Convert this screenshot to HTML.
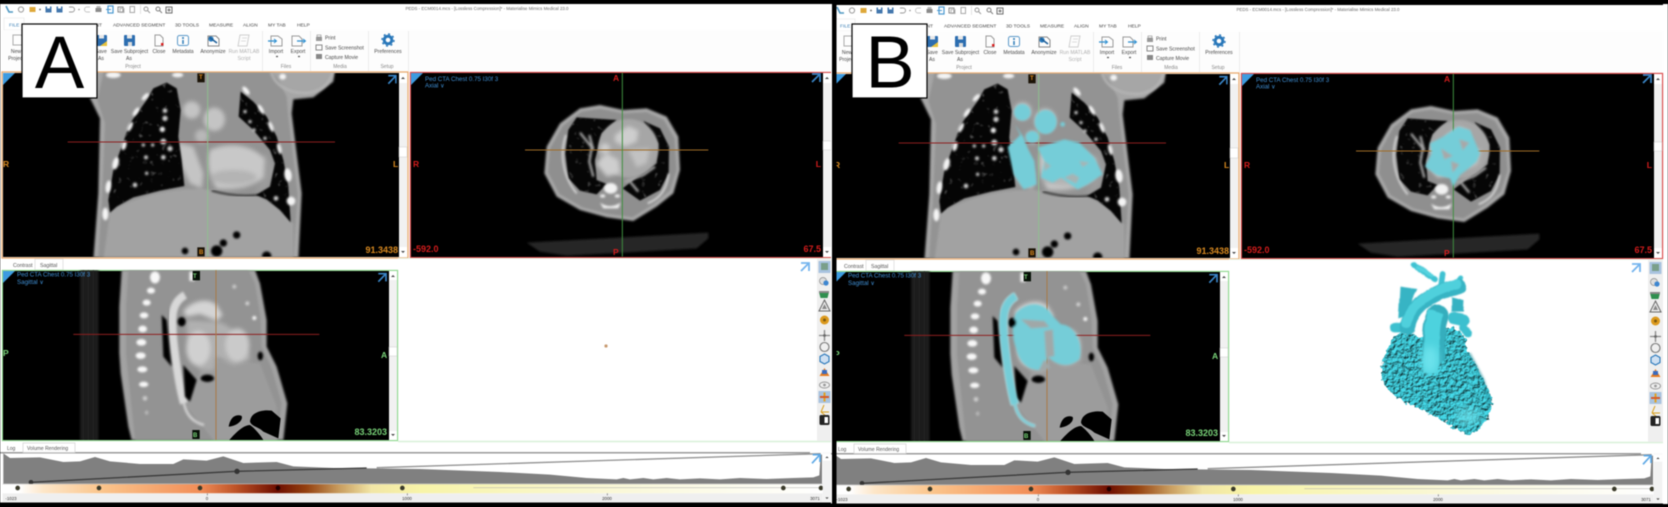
<!DOCTYPE html>
<html><head><meta charset="utf-8"><title>Mimics Medical comparison</title>
<style>
html,body{margin:0;padding:0;background:#000;width:1668px;height:507px;overflow:hidden}
svg{display:block;filter:blur(.5px)}
text{font-family:"Liberation Sans",sans-serif}
.tb{font-size:4.9px;fill:#444}
.rb{font-size:5.1px;fill:#4a4a4a;text-anchor:middle}
.rl{font-size:5.1px;fill:#4a4a4a}
.gp{font-size:5px;fill:#888;text-anchor:middle}
.inf{font-size:6.2px;fill:#3f8fd4}
.o{fill:#d98a20;font-weight:bold;font-size:8.5px}
.r{fill:#d41c1c;font-weight:bold;font-size:8.5px}
.g{fill:#79d379;font-weight:bold;font-size:8.5px}
.tk{font-size:4.4px;fill:#333;text-anchor:middle}
.big{font-size:74px;fill:#000;text-anchor:middle}
</style></head><body>
<svg xmlns="http://www.w3.org/2000/svg" width="1668" height="507" viewBox="0 0 1668 507">
<defs>
<filter id="b3"><feGaussianBlur stdDeviation="3"/></filter>
<filter id="b6" x="-30%" y="-30%" width="160%" height="160%"><feGaussianBlur stdDeviation="6"/></filter>
<filter id="b14" x="-30%" y="-30%" width="160%" height="160%"><feGaussianBlur stdDeviation="12"/></filter>
<filter id="lung" color-interpolation-filters="sRGB" x="-5%" y="-5%" width="110%" height="110%">
<feTurbulence type="fractalNoise" baseFrequency=".06" numOctaves="2" seed="7"/>
<feColorMatrix values="0 0 0 0 .42  0 0 0 0 .42  0 0 0 0 .42  3.500 0 0 0 -2.250" result="sp"/>
<feGaussianBlur in="SourceGraphic" stdDeviation="2.500" result="base"/>
<feComposite in="sp" in2="SourceAlpha" operator="in" result="t"/>
<feGaussianBlur in="t" stdDeviation="1.500" result="t2"/>
<feMerge><feMergeNode in="base"/><feMergeNode in="t2"/></feMerge></filter>
<filter id="bump" color-interpolation-filters="sRGB" x="-10%" y="-10%" width="120%" height="120%"><feTurbulence type="fractalNoise" baseFrequency=".075" numOctaves="3" seed="4" result="n"/><feDisplacementMap in="SourceGraphic" in2="n" scale="18" xChannelSelector="R" yChannelSelector="G" result="d"/><feDiffuseLighting in="n" surfaceScale="7" lighting-color="#fff" result="l"><feDistantLight azimuth="235" elevation="58"/></feDiffuseLighting><feComposite in="l" in2="d" operator="arithmetic" k1="1.12" k2="0" k3="0" k4="0"/></filter>
<filter id="soft" color-interpolation-filters="sRGB" x="-15%" y="-15%" width="130%" height="130%"><feTurbulence type="fractalNoise" baseFrequency=".03" numOctaves="2" seed="9" result="n"/><feDisplacementMap in="SourceGraphic" in2="n" scale="7" xChannelSelector="R" yChannelSelector="G"/><feGaussianBlur stdDeviation="1.500"/></filter>
<linearGradient id="bar" x1="0" x2="1" gradientUnits="objectBoundingBox">
<stop offset="0" stop-color="#fff"/><stop offset=".02" stop-color="#fff"/><stop offset=".05" stop-color="#fde6c8"/><stop offset=".12" stop-color="#fbc58c"/><stop offset=".24" stop-color="#f28e58"/><stop offset=".285" stop-color="#bd5226"/><stop offset=".335" stop-color="#6e0e00"/><stop offset=".37" stop-color="#94400f"/><stop offset=".41" stop-color="#c89c5e"/><stop offset=".45" stop-color="#f2e6a6"/><stop offset=".51" stop-color="#f8f4a8"/><stop offset=".75" stop-color="#faf8d8"/><stop offset="1" stop-color="#fff"/></linearGradient>
<clipPath id="c1"><rect x="10" y="38" width="1180" height="552"/></clipPath>
<clipPath id="c2"><rect x="93" y="38" width="1236" height="552"/></clipPath>
<clipPath id="c3"><rect x="10" y="90" width="1155" height="510"/></clipPath>

<g id="gfx">
<rect x="0" y="4" width="832" height="500" fill="#fff"/>
<rect x="4" y="18" width="20" height="12" fill="#fff" stroke="#e4e4e4" stroke-width=".6"/>
<rect x="0" y="30" width="832" height="41" fill="#fdfdfd"/>
<g stroke="#ececec"><path d="M262.500 31V71M310.500 31V71M368.500 31V71M408.500 31V71"/></g>
<g stroke-width="1" fill="none" opacity=".85">
<path d="M6,6 L9,12 H13" stroke="#2f86b8" stroke-width="1.600"/>
<circle cx="21" cy="9.500" r="2.600" stroke="#888"/>
<rect x="29.500" y="7" width="6" height="5" fill="#d99a18"/>
<circle cx="40" cy="9.500" r=".9" fill="#444" stroke="none"/>
<rect x="45.500" y="6.500" width="6" height="6" fill="#23609f"/><rect x="47" y="6.500" width="3" height="2" fill="#fff"/>
<rect x="56.500" y="6.500" width="6" height="6" fill="#23609f"/><rect x="58" y="6.500" width="3" height="2" fill="#fff"/>
<path d="M69,7 H72 A2.500,2.500 0 0 1 72,12 H69" stroke="#888"/>
<circle cx="79" cy="9.500" r=".8" fill="#777" stroke="none"/>
<path d="M90,7 H87 A2.500,2.500 0 0 0 87,12 H90" stroke="#bbb"/>
<rect x="95.500" y="8" width="6" height="4" fill="#777"/><rect x="96.500" y="6" width="4" height="2" fill="#aaa"/>
<rect x="108" y="6" width="5" height="7" stroke="#2a86c8" stroke-width="1.200"/><path d="M106,9.500 H111" stroke="#2a86c8"/>
<rect x="118" y="7" width="5" height="5" stroke="#777"/><rect x="120" y="8.500" width="4" height="4" stroke="#aaa"/>
<rect x="130" y="6.500" width="4.500" height="6" stroke="#999"/>
<path d="M140.500,5V14" stroke="#ddd"/>
<circle cx="146" cy="9" r="2" stroke="#888"/><path d="M147.500,10.500L150,13" stroke="#888"/>
<circle cx="158" cy="9" r="2" stroke="#666"/><path d="M159.500,10.500L162,13" stroke="#666"/>
<rect x="166" y="7" width="6" height="6" stroke="#555"/><circle cx="169" cy="10" r="1.500" fill="#777" stroke="none"/>
</g>
<g fill="none" stroke-width="1">
<path d="M13,35 H21 L24,38 V45 H13 Z" stroke="#aaa"/>
<rect x="96" y="35" width="11" height="11" rx="1" fill="#2d6eb0"/><rect x="99" y="35" width="5" height="3.500" fill="#e8e8e8"/><path d="M100,46 L107,41 V46Z" fill="#e8c33c"/>
<rect x="124" y="35" width="11" height="11" rx="1" fill="#2d6eb0"/><rect x="127" y="35" width="5" height="3.500" fill="#e8e8e8"/><rect x="128" y="42" width="4" height="4" fill="#ddd"/>
<path d="M155,35 H160 L163,38 V46 H155 Z" stroke="#999"/><rect x="161" y="43" width="2.500" height="2.500" fill="#d82020"/>
<rect x="177.500" y="35.500" width="11" height="10" rx="2" stroke="#5a98c8"/><circle cx="183" cy="38" r="1" fill="#2b7ab8"/><path d="M183,40V44" stroke="#2b7ab8" stroke-width="1.500"/>
<path d="M208,36 H216 L219,39 V46 H208Z" stroke="#888"/><circle cx="211" cy="39" r="2.600" fill="#2d7ec0"/><path d="M209,37L217,43" stroke="#1d5f98" stroke-width="1.600"/>
<path d="M240,35 H249 L247,46 H238Z" stroke="#cfcfcf"/><path d="M242,38H247M241,41H246" stroke="#ddd"/>
<path d="M271,36 H278 L282,39 V46 H271Z" stroke="#999"/><path d="M268,41 H276" stroke="#2f90d0" stroke-width="1.300"/><path d="M274,39 L276.500,41 274,43" stroke="#2f90d0"/>
<path d="M292,36 H299 L302,39 V46 H292Z" stroke="#999"/><path d="M297,41 H305" stroke="#2f90d0" stroke-width="1.300"/><path d="M303,39 L305.500,41 303,43" stroke="#2f90d0"/>
<rect x="316" y="37" width="6" height="4" fill="#999"/><rect x="317" y="35" width="4" height="2" stroke="#888" stroke-width=".6"/>
<rect x="316" y="45" width="6" height="5" stroke="#888"/>
<rect x="316" y="54" width="6" height="5" fill="#888"/>
<circle cx="388" cy="40" r="3.800" stroke="#2a78ba" stroke-width="3"/><circle cx="388" cy="40" r="6" stroke="#2a78ba" stroke-width="1.400" stroke-dasharray="2 2.700"/>
<path d="M276,56.500h2M298,56.500h2" stroke="#555" stroke-width="1.200"/>
</g>

<!-- Coronal -->
<rect x="2" y="72" width="406" height="186" fill="#fff" stroke="#e8aa70" stroke-width="1.300"/>
<rect x="3" y="73" width="396" height="184" fill="#000"/>
<g transform="translate(0,60) scale(.33333)" clip-path="url(#c1)">
<path filter="url(#b3)" fill="#a6a6a6" d="M275,30 L268,110 L300,175 L295,400 L280,600 L895,600 L905,400 L875,160 L880,118 L940,112 L1000,65 L1005,30 Z"/>
<path filter="url(#b3)" fill="#939393" d="M312,30 L292,120 L315,190 L306,410 L294,600 L880,600 L893,400 L865,170 L860,110 L835,60 L810,30Z"/>
<path fill="none" stroke="#b5b5b5" stroke-width="7" filter="url(#b3)" d="M812,30 C820,70 860,105 930,98 C975,90 995,60 998,30"/>
<path filter="url(#b3)" fill="#a2a2a2" d="M330,455 C420,400 560,375 640,392 L770,408 C810,420 860,470 880,490 L880,600 L310,600Z"/>
<g filter="url(#b6)" fill="#c4c4c4">
<circle cx="575" cy="150" r="26"/><ellipse cx="643" cy="178" rx="32" ry="35"/><circle cx="605" cy="228" r="20" fill="#b8b8b8"/>
<path d="M530,248 L580,260 L610,340 L605,385 L570,370 L545,320Z"/>
<path d="M630,270 C700,240 780,260 810,320 C800,370 720,395 650,385 C625,350 620,300 630,270Z" fill="#c8c8c8"/>
<ellipse cx="700" cy="352" rx="70" ry="22" fill="#b4b4b4"/>
<path d="M795,270 L825,330 L800,385 L760,400 L790,360Z" fill="#9c9c9c"/>
</g>
<path filter="url(#lung)" fill="#050505" d="M500,68 L530,85 L542,150 L535,230 L545,300 L553,378 L480,392 L400,412 L350,440 L330,458 L325,420 L340,330 L365,260 L390,190 L440,120 L460,85 Z"/>
<path filter="url(#lung)" fill="#050505" d="M722,95 L760,125 L800,170 L830,230 L850,300 L865,380 L872,487 L840,450 L800,418 L768,405 L810,380 L825,310 L810,270 L760,210 L716,170 Z"/>
<path fill="none" stroke="#0a0a0a" stroke-width="4" filter="url(#b3)" d="M635,392 C680,405 730,410 775,405"/>
<g fill="#d0d0d0" filter="url(#b3)">
<circle cx="495" cy="152" r="7"/><circle cx="495" cy="175" r="8"/><circle cx="487" cy="208" r="8" fill="#eee"/><circle cx="490" cy="245" r="9"/><circle cx="510" cy="266" r="8"/><circle cx="430" cy="255" r="5"/><circle cx="458" cy="255" r="5"/><circle cx="490" cy="292" r="7"/><circle cx="438" cy="292" r="6"/><circle cx="440" cy="340" r="5"/><circle cx="405" cy="375" r="7"/>
<circle cx="735" cy="155" r="5"/><circle cx="750" cy="185" r="5"/><circle cx="762" cy="210" r="5"/><circle cx="795" cy="235" r="5"/><circle cx="828" cy="415" r="7"/>
</g>
<g fill="#f5f5f5" filter="url(#b3)">
<ellipse cx="436" cy="110" rx="6" ry="14" transform="rotate(45 436 110)"/><ellipse cx="408" cy="155" rx="6" ry="15" transform="rotate(35 408 155)"/><ellipse cx="390" cy="200" rx="6" ry="16" transform="rotate(25 390 200)"/><ellipse cx="372" cy="256" rx="7" ry="15" transform="rotate(15 372 256)"/><ellipse cx="347" cy="310" rx="9" ry="19" transform="rotate(15 347 310)"/><ellipse cx="325" cy="380" rx="8" ry="19" transform="rotate(8 325 380)"/><ellipse cx="316" cy="462" rx="9" ry="19"/>
<ellipse cx="738" cy="92" rx="7" ry="15" transform="rotate(-40 738 92)"/><ellipse cx="783" cy="148" rx="6" ry="16" transform="rotate(-30 783 148)"/><ellipse cx="813" cy="200" rx="6" ry="17" transform="rotate(-22 813 200)"/><ellipse cx="838" cy="266" rx="6" ry="17" transform="rotate(-14 838 266)"/><ellipse cx="864" cy="345" rx="11" ry="20" transform="rotate(-8 864 345)"/><ellipse cx="873" cy="423" rx="13" ry="13"/>
<ellipse cx="340" cy="45" rx="22" ry="9"/><ellipse cx="533" cy="45" rx="17" ry="7"/><ellipse cx="848" cy="50" rx="10" ry="9"/>
</g>
<g fill="#040404" filter="url(#b3)"><circle cx="555" cy="573" r="10"/><circle cx="650" cy="573" r="17"/><circle cx="670" cy="549" r="11"/><circle cx="710" cy="525" r="11"/><circle cx="800" cy="588" r="14"/></g>
<path d="M203,246 H1005" stroke="#8d1f1f" stroke-width="3"/>
<path d="M623,38 V590" stroke="#8fbf8f" stroke-width="3"/>
<rect x="592" y="40" width="22" height="27" fill="#1a1206"/><rect x="592" y="562" width="22" height="27" fill="#1a1206"/>
<path d="M1165,47 H1188 V70 M1186,49 L1165,71" fill="none" stroke="#3a86c8" stroke-width="5"/>
</g>
<path d="M3,73 H15 L3,85Z" fill="#3d9be0"/>
<rect x="399" y="73" width="8" height="184" fill="#f1f1f1"/><rect x="399" y="73" width="8" height="10" fill="#fff"/><rect x="399" y="247" width="8" height="10" fill="#fff"/><rect x="399" y="147" width="8" height="10" fill="#fff" stroke="#ccc" stroke-width=".5"/>
<path d="M401,79l2-2 2,2ZM401,251l2,2 2-2Z" fill="#444"/>

<!-- Axial -->
<rect x="410.500" y="72.500" width="421" height="185" fill="#f0f0f0" stroke="#d94a4a" stroke-width="1.300"/>
<rect x="411" y="73" width="412" height="184" fill="#000"/>
<g transform="translate(380,60) scale(.33333)" clip-path="url(#c2)">
<path filter="url(#b3)" fill="#262626" d="M440,548 L985,518 L985,535 L950,565 L730,578 L560,587 L480,575Z"/>
<path filter="url(#b3)" fill="#a8a8a8" d="M600,145 L660,135 L730,150 L800,145 L860,170 L895,230 L900,330 L880,400 L830,440 L760,483 L680,472 L600,450 L530,410 L493,340 L500,260 L540,190Z"/>
<path filter="url(#b3)" fill="#8f8f8f" d="M605,155 L660,146 L730,160 L800,156 L852,180 L884,235 L890,330 L870,392 L824,430 L758,472 L684,462 L607,442 L538,402 L504,338 L510,265 L548,198Z"/>
<path filter="url(#lung)" fill="#060606" d="M590,172 L710,180 L665,220 L645,300 L650,360 L680,372 L650,403 L600,392 L565,355 L556,280 L565,210Z"/>
<path filter="url(#lung)" fill="#060606" d="M790,183 L840,205 L867,260 L866,340 L840,390 L780,422 L728,385 L780,345 L830,310 L835,250Z"/>
<g filter="url(#b3)" fill="none" stroke="#a8a8a8" stroke-width="7"><path d="M600,218 L635,262 L628,305 L640,350"/><path d="M628,225 L640,270"/><path d="M735,365 L790,345 L825,320"/><path d="M750,365 L775,395"/></g>
<ellipse cx="745" cy="265" rx="90" ry="88" fill="#a6a6a6" filter="url(#b3)"/>
<g filter="url(#b6)" fill="#cecece"><path d="M745,198 L775,212 L770,245 L735,260 L705,245 L705,225Z"/><path d="M745,270 L810,265 L800,310 L770,322Z" fill="#c2c2c2"/><path d="M648,310 L680,280 L715,300 L720,340 L680,350Z"/><circle cx="675" cy="265" r="15"/></g>
<g fill="none" stroke="#f4f4f4" stroke-width="4" filter="url(#b3)"><path d="M558,225 C540,275 545,345 590,400"/><path d="M866,340 C860,390 840,415 803,430"/></g>
<g fill="#f2f2f2" filter="url(#b3)"><ellipse cx="692" cy="385" rx="20" ry="16"/><ellipse cx="668" cy="408" rx="8" ry="5"/><ellipse cx="712" cy="408" rx="8" ry="5"/><path d="M660,428 C680,442 700,442 722,428 L715,445 L670,445Z"/></g>
<path d="M435,270 H985" stroke="#a06c26" stroke-width="3"/>
<path d="M727,38 V590" stroke="#3f8f3f" stroke-width="3"/>
</g>
<path d="M411,73 H423 L411,85Z" fill="#3d9be0"/>
<path d="M812,74 H820 V82 M819,75 L812,82" fill="none" stroke="#3a86c8" stroke-width="1.700"/>
<rect x="823" y="73" width="8" height="184" fill="#f1f1f1"/><rect x="823" y="73" width="8" height="10" fill="#fff"/><rect x="823" y="247" width="8" height="10" fill="#fff"/><rect x="823" y="141" width="8" height="9" fill="#fff" stroke="#ccc" stroke-width=".5"/>
<path d="M825,79l2-2 2,2ZM825,251l2,2 2-2Z" fill="#444"/>

<rect x="35" y="259" width="28" height="11" fill="#fff" stroke="#d8d8d8" stroke-width=".7"/>

<!-- Sagittal -->
<rect x="2.500" y="270.500" width="395" height="170" fill="#fff" stroke="#90d890" stroke-width="1.300"/>
<rect x="3" y="271" width="386" height="169" fill="#000"/>
<g transform="translate(0,240) scale(.33333)" clip-path="url(#c3)">
<rect x="240" y="90" width="56" height="510" fill="#1a1a1a" filter="url(#b3)"/>
<path d="M250,90V600M265,90V600M280,90V600" stroke="#262626" stroke-width="2"/>
<path filter="url(#b3)" fill="#a2a2a2" d="M365,90 L358,200 L358,340 L362,400 L385,560 L395,600 L850,600 L862,490 L830,380 L800,320 L800,240 L780,130 L765,90Z"/>
<path filter="url(#b3)" fill="#939393" d="M385,90 L378,200 L378,340 L385,410 L405,600 L832,600 L845,490 L815,385 L785,320 L782,235 L765,130 L745,90Z"/>
<path filter="url(#b3)" fill="#9c9c9c" d="M560,500 L600,395 L650,360 L780,370 L830,500 L830,600 L640,600Z"/>
<g filter="url(#b6)">
<path fill="#b0b0b0" d="M560,240 L640,245 L670,250 L745,300 L750,360 L700,375 L650,350 L640,390 L600,390 L560,340Z"/>
<path fill="#d4d4d4" d="M550,215 C570,185 620,170 650,195 L668,225 L650,242 L600,222 L560,230Z"/>
<ellipse cx="595" cy="325" rx="36" ry="52" fill="#d0d0d0"/>
<ellipse cx="712" cy="315" rx="36" ry="50" fill="#cacaca"/>
</g>
<g filter="url(#b3)" fill="none">
<path stroke="#d8d8d8" stroke-width="24" d="M555,165 C510,190 515,240 520,300 C530,390 540,450 552,490"/>
<path stroke="#d0d0d0" stroke-width="8" d="M552,490 C560,530 585,548 612,555"/>
</g>
<g fill="#040404" filter="url(#b3)"><ellipse cx="545" cy="245" rx="12" ry="14"/><ellipse cx="622" cy="415" rx="20" ry="11"/><ellipse cx="781" cy="348" rx="8" ry="13"/>
<path d="M485,225 L500,240 L510,340 L515,380 L490,350Z"/><path d="M550,375 L590,420 L570,485 L555,470Z"/></g>
<g fill="#f8f8f8" filter="url(#b3)"><ellipse cx="465" cy="112" rx="15" ry="18"/><ellipse cx="453" cy="152" rx="12" ry="9"/><ellipse cx="440" cy="188" rx="12" ry="9"/><ellipse cx="432" cy="226" rx="13" ry="9"/><ellipse cx="428" cy="267" rx="13" ry="10"/><ellipse cx="424" cy="307" rx="15" ry="10"/><ellipse cx="422" cy="347" rx="15" ry="10"/><ellipse cx="427" cy="388" rx="15" ry="9"/><ellipse cx="431" cy="433" rx="14" ry="8"/><ellipse cx="435" cy="475" rx="7" ry="7" fill="#ccc"/><ellipse cx="440" cy="518" rx="5" ry="6" fill="#bbb"/>
<circle cx="703" cy="140" r="6" fill="#c8c8c8"/><circle cx="742" cy="190" r="6" fill="#d0d0d0"/><circle cx="763" cy="234" r="6"/><rect x="568" y="95" width="16" height="28" fill="#eee"/></g>
<path d="M220,283 H958" stroke="#8d1f1f" stroke-width="3"/>
<path d="M648,90 V600" stroke="#a97a48" stroke-width="3"/>
<path fill="#000" d="M686,560 C690,535 705,520 725,528 C730,540 712,558 686,560Z M750,545 C752,515 790,508 815,512 L842,535 L835,595 L790,575 C775,560 755,560 750,545Z M688,600 C705,580 730,555 750,555 C765,565 785,590 790,600Z"/>
<rect x="578" y="93" width="22" height="28" fill="#061006"/><rect x="577" y="570" width="22" height="27" fill="#061006"/>
<path d="M1135,101 H1158 V124 M1156,103 L1135,125" fill="none" stroke="#3a86c8" stroke-width="5"/>
</g>
<path d="M3,271 H15 L3,283Z" fill="#3d9be0"/>
<rect x="389" y="271" width="8" height="169" fill="#f1f1f1"/><rect x="389" y="271" width="8" height="9" fill="#fff"/><rect x="389" y="431" width="8" height="9" fill="#fff"/><rect x="389" y="347" width="8" height="9" fill="#fff" stroke="#ccc" stroke-width=".5"/>
<path d="M391,277l2-2 2,2ZM391,434l2,2 2-2Z" fill="#444"/>

<!-- 3D view -->
<path d="M398,441.500 H832" stroke="#d8f0d8" stroke-width="1.500"/>
<path d="M398,258.500 H832" stroke="#e8f6e8" stroke-width="1"/>
<rect x="817" y="259" width="15" height="182" fill="#efefef"/>
<path d="M801,263 H809 V271 M808,264 L801,271" fill="none" stroke="#74b4ee" stroke-width="1.800"/>
<rect x="818.500" y="261" width="12" height="12" fill="#a9c3df"/><rect x="821" y="263" width="7" height="7" fill="#7a9f8a"/>
<circle cx="823" cy="281" r="3.500" fill="#ddd" stroke="#888" stroke-width=".7"/><circle cx="826" cy="283" r="2.600" fill="#3d86d0"/>
<path d="M819,292 H829 L827.500,298 H820.500Z" fill="#2f8f4f"/><rect x="819" y="291" width="10" height="2" fill="#888"/>
<path d="M824.500,300 L830,311 H819Z" fill="none" stroke="#666"/><path d="M824.500,304 L827,309 H822Z" fill="#888"/>
<circle cx="824.500" cy="320" r="4.500" fill="#dc9a1e"/><circle cx="824.500" cy="320" r="1.500" fill="#7c5a10"/>
<path d="M824.500,330V341M819,335.500H830" stroke="#888" stroke-width="1.300"/><circle cx="824.500" cy="335.500" r="1.400" fill="#666"/>
<circle cx="824.500" cy="347" r="4.500" fill="none" stroke="#777" stroke-width="1.100"/>
<path d="M824.500,354 L829,356.500 V361.500 L824.500,364 820,361.500 V356.500Z" fill="#cfe0f2" stroke="#2a78ba" stroke-width="1.100"/>
<path d="M824.500,368 L829.500,376 H819.500Z" fill="#e87c20"/><rect x="822" y="370" width="5" height="4" fill="#3a6cc0"/>
<ellipse cx="824.500" cy="385" rx="5" ry="3" fill="none" stroke="#999"/><circle cx="824.500" cy="385" r="1.400" fill="#999"/>
<rect x="818.500" y="391" width="12" height="12" fill="#a9c3df"/><path d="M824.500,392.500V401.500" stroke="#e2a020" stroke-width="2"/><path d="M820,397H829" stroke="#d65a2a" stroke-width="2"/>
<path d="M821,412 L824,405 M821,412 H829 M821,412 L826,416" stroke="#d8a020" fill="none"/>
<rect x="819.500" y="415" width="10" height="10" rx="1.500" fill="#222"/><rect x="824.500" y="417" width="3.500" height="6" fill="#fff"/>
<circle cx="606" cy="346" r="1.600" fill="#c89a70"/>

<!-- Histogram -->
<rect x="0" y="452" width="810" height="1.500" fill="#9a9a9a"/>
<rect x="23" y="443" width="52" height="9.500" fill="#fff" stroke="#d0d0d0" stroke-width=".7"/>
<g transform="translate(0,438) scale(.33333)">
<path fill="#808080" d="M10,46 L30,60 L120,58 L190,72 L240,70 L285,57 L330,70 L420,78 L520,78 L550,64 L620,68 L670,55 L730,75 L830,72 L880,85 L1000,90 L1260,93 L1500,102 L1650,110 L1760,120 L1800,122 L1850,124 L1870,120 L1890,124 L1930,120 L1960,124 L2000,120 L2040,124 L2100,121 L2160,124 L2220,120 L2300,123 L2380,120 L2440,118 L2458,112 L2462,50 L2466,50 L2466,137 L10,137Z"/>
<path d="M93,133 L710,100 L1100,90" stroke="#3a3a3a" stroke-width="4" fill="none"/>
<path d="M1130,89 L2462,47" stroke="#909090" stroke-width="4" fill="none"/>
<circle cx="711" cy="100" r="8" fill="#333"/><circle cx="93" cy="133" r="7" fill="#333"/>
<rect x="8" y="138" width="2460" height="28" fill="url(#bar)"/>
<path d="M8,138H2468M1420,149H2468" stroke="#aaa" stroke-width="1.500"/>
<g fill="#3a3a2a"><circle cx="53" cy="150" r="7"/><circle cx="297" cy="150" r="7"/><circle cx="600" cy="150" r="7"/><circle cx="834" cy="150" r="7" fill="#200"/><circle cx="1207" cy="150" r="7"/><circle cx="2350" cy="150" r="7"/><circle cx="2463" cy="150" r="7"/></g>
<rect x="8" y="166" width="2460" height="26" fill="#efefef"/>
<path d="M622,166v6M1222,166v6M1822,166v6" stroke="#666" stroke-width="2"/>
<rect x="2468" y="44" width="26" height="148" fill="#f2f2f2"/><rect x="2468" y="46" width="26" height="22" fill="#fff"/>
<path d="M2476,60l5-5 5,5ZM2476,178l5,5 5-5Z" fill="#444"/>
<path d="M2438,50 H2460 V72 M2458,52 L2436,76" fill="none" stroke="#5ca8e6" stroke-width="5"/>
</g>
<rect x="0" y="502.500" width="832" height="2" fill="#000"/>
</g>
</defs>

<rect width="1668" height="507" fill="#000"/>
<rect x="1663" y="4" width="5" height="500" fill="#fff"/>

<!-- PANEL A -->
<g>
<use href="#gfx"/>
<text x="487" y="10" font-size="4.400" fill="#666" text-anchor="middle">PEDS - ECM0014.mcs - [Lossless Compression]* - Materialise Mimics Medical 23.0</text>
<text x="9" y="26.500" class="tb" style="fill:#3a7fb5">FILE</text>
<text x="102" y="26.500" class="tb" text-anchor="end">SEGMENT</text>
<text x="113" y="26.500" class="tb">ADVANCED SEGMENT</text>
<text x="175" y="26.500" class="tb">3D TOOLS</text>
<text x="209" y="26.500" class="tb">MEASURE</text>
<text x="243" y="26.500" class="tb">ALIGN</text>
<text x="268" y="26.500" class="tb">MY TAB</text>
<text x="297" y="26.500" class="tb">HELP</text>
<text x="16" y="53" class="rb">New</text><text x="16" y="60" class="rb">Project</text>
<text x="101" y="53" class="rb">Save</text><text x="101" y="60" class="rb">As</text>
<text x="129.500" y="53" class="rb">Save Subproject</text><text x="129" y="60" class="rb">As</text>
<text x="159" y="53" class="rb">Close</text>
<text x="183" y="53" class="rb">Metadata</text>
<text x="213" y="53" class="rb">Anonymize</text>
<text x="244" y="53" class="rb" style="fill:#b0b0b0">Run MATLAB</text><text x="244" y="60" class="rb" style="fill:#b0b0b0">Script</text>
<text x="276" y="53" class="rb">Import</text><text x="298" y="53" class="rb">Export</text>
<text x="325" y="39.500" class="rl">Print</text>
<text x="325" y="49.500" class="rl">Save Screenshot</text>
<text x="325" y="59" class="rl">Capture Movie</text>
<text x="388" y="53" class="rb">Preferences</text>
<text x="133" y="68" class="gp">Project</text><text x="286" y="68" class="gp">Files</text><text x="340" y="68" class="gp">Media</text><text x="387" y="68" class="gp">Setup</text>
<text x="425" y="81" class="inf">Ped CTA Chest 0.75 I30f 3</text><text x="425" y="87.500" class="inf">Axial ∨</text>
<text x="17" y="276.500" class="inf">Ped CTA Chest 0.75 I30f 3</text><text x="17" y="284" class="inf">Sagittal ∨</text>
<text x="3" y="167" class="o">R</text><text x="393" y="167" class="o">L</text>
<text x="199" y="79" class="o" style="font-size:6px">T</text><text x="199" y="254" class="o" style="font-size:6px">B</text>
<text x="398" y="253" class="o" text-anchor="end" style="font-size:9px">91.3438</text>
<text x="413" y="167" class="r">R</text><text x="821" y="167" class="r" text-anchor="end">L</text>
<text x="613" y="81" class="r">A</text><text x="613" y="255" class="r">P</text>
<text x="413" y="252" class="r" style="font-size:9px">-592.0</text>
<text x="821" y="252" class="r" text-anchor="end" style="font-size:9px">67.5</text>
<text x="13" y="267" font-size="5.200" fill="#555">Contrast</text><text x="40" y="267" font-size="5.200" fill="#555">Sagittal</text>
<text x="3" y="356" class="g">P</text><text x="381" y="358" class="g">A</text>
<text x="193" y="278" class="g" style="font-size:6px">T</text><text x="193" y="437" class="g" style="font-size:6px">B</text>
<text x="387" y="435" class="g" text-anchor="end" style="font-size:9px">83.3203</text>
<text x="7" y="450" font-size="5" fill="#555">Log</text><text x="27" y="450" font-size="5" fill="#555">Volume Rendering</text>
<text x="11" y="500" class="tk">-1023</text><text x="207" y="500" class="tk">0</text><text x="407" y="500" class="tk">1000</text><text x="607" y="500" class="tk">2000</text><text x="815" y="500" class="tk">3071</text>
</g>

<!-- PANEL B -->
<g transform="translate(831,1)">
<use href="#gfx"/>
<g transform="translate(0,60) scale(.33333)" fill="#74cdd8" filter="url(#b3)">
<ellipse cx="574" cy="154" rx="25" ry="25"/><ellipse cx="644" cy="183" rx="33" ry="36"/><ellipse cx="604" cy="228" rx="20" ry="18"/>
<path d="M552,190 L568,222 L530,258 L548,340 L578,385 L617,370 L610,300 L590,262 L578,230Z"/>
<path d="M620,260 L700,235 L745,245 L790,290 L815,340 L770,370 L740,385 L690,350 L665,365 L630,350 L640,300Z"/>
<circle cx="695" cy="190" r="7"/>
<path fill="#a6b4b4" d="M700,350 L725,338 L745,350 L735,368Z M745,300 L775,305 L755,318Z M640,300 L660,315 L640,330Z"/>
</g>
<g transform="translate(380,60) scale(.33333)" filter="url(#b3)">
<path fill="#74cdd8" d="M742,197 L777,207 L807,277 L797,302 L767,327 L747,342 L727,377 L717,352 L677,342 L642,317 L662,277 L657,247 L697,227Z"/>
<path fill="#a8a8a8" d="M690,262 L725,285 L700,295Z M745,235 L775,245 L755,268Z M720,300 L745,310 L725,335Z"/>
</g>
<g transform="translate(0,240) scale(.33333)" filter="url(#b3)" fill="none">
<path stroke="#74cdd8" stroke-width="24" d="M555,165 C510,190 515,240 520,300 C530,390 540,450 552,490"/>
<path stroke="#74cdd8" stroke-width="8" d="M552,490 C560,530 585,548 612,555"/>
<path fill="#74cdd8" d="M555,215 C590,180 640,180 665,225 L690,250 C730,250 760,310 745,355 C710,385 670,370 650,345 L640,385 C600,395 565,370 555,320 C540,280 545,240 555,215Z"/>
<path fill="#a0a8a8" d="M570,235 L640,240 L655,258 L600,262Z M640,270 L665,265 L670,345 L645,350Z M640,355 L620,395 L660,380Z"/>
<ellipse cx="545" cy="245" rx="11" ry="13" fill="#050505"/>
</g>
<text x="487" y="10" font-size="4.400" fill="#666" text-anchor="middle">PEDS - ECM0014.mcs - [Lossless Compression]* - Materialise Mimics Medical 23.0</text>
<text x="9" y="26.500" class="tb" style="fill:#3a7fb5">FILE</text>
<text x="102" y="26.500" class="tb" text-anchor="end">SEGMENT</text>
<text x="113" y="26.500" class="tb">ADVANCED SEGMENT</text>
<text x="175" y="26.500" class="tb">3D TOOLS</text>
<text x="209" y="26.500" class="tb">MEASURE</text>
<text x="243" y="26.500" class="tb">ALIGN</text>
<text x="268" y="26.500" class="tb">MY TAB</text>
<text x="297" y="26.500" class="tb">HELP</text>
<text x="16" y="53" class="rb">New</text><text x="16" y="60" class="rb">Project</text>
<text x="101" y="53" class="rb">Save</text><text x="101" y="60" class="rb">As</text>
<text x="129.500" y="53" class="rb">Save Subproject</text><text x="129" y="60" class="rb">As</text>
<text x="159" y="53" class="rb">Close</text>
<text x="183" y="53" class="rb">Metadata</text>
<text x="213" y="53" class="rb">Anonymize</text>
<text x="244" y="53" class="rb" style="fill:#b0b0b0">Run MATLAB</text><text x="244" y="60" class="rb" style="fill:#b0b0b0">Script</text>
<text x="276" y="53" class="rb">Import</text><text x="298" y="53" class="rb">Export</text>
<text x="325" y="39.500" class="rl">Print</text>
<text x="325" y="49.500" class="rl">Save Screenshot</text>
<text x="325" y="59" class="rl">Capture Movie</text>
<text x="388" y="53" class="rb">Preferences</text>
<text x="133" y="68" class="gp">Project</text><text x="286" y="68" class="gp">Files</text><text x="340" y="68" class="gp">Media</text><text x="387" y="68" class="gp">Setup</text>
<text x="425" y="81" class="inf">Ped CTA Chest 0.75 I30f 3</text><text x="425" y="87.500" class="inf">Axial ∨</text>
<text x="17" y="276.500" class="inf">Ped CTA Chest 0.75 I30f 3</text><text x="17" y="284" class="inf">Sagittal ∨</text>
<text x="3" y="167" class="o">R</text><text x="393" y="167" class="o">L</text>
<text x="199" y="79" class="o" style="font-size:6px">T</text><text x="199" y="254" class="o" style="font-size:6px">B</text>
<text x="398" y="253" class="o" text-anchor="end" style="font-size:9px">91.3438</text>
<text x="413" y="167" class="r">R</text><text x="821" y="167" class="r" text-anchor="end">L</text>
<text x="613" y="81" class="r">A</text><text x="613" y="255" class="r">P</text>
<text x="413" y="252" class="r" style="font-size:9px">-592.0</text>
<text x="821" y="252" class="r" text-anchor="end" style="font-size:9px">67.5</text>
<text x="13" y="267" font-size="5.200" fill="#555">Contrast</text><text x="40" y="267" font-size="5.200" fill="#555">Sagittal</text>
<text x="3" y="356" class="g">P</text><text x="381" y="358" class="g">A</text>
<text x="193" y="278" class="g" style="font-size:6px">T</text><text x="193" y="437" class="g" style="font-size:6px">B</text>
<text x="387" y="435" class="g" text-anchor="end" style="font-size:9px">83.3203</text>
<text x="7" y="450" font-size="5" fill="#555">Log</text><text x="27" y="450" font-size="5" fill="#555">Volume Rendering</text>
<text x="11" y="500" class="tk">-1023</text><text x="207" y="500" class="tk">0</text><text x="407" y="500" class="tk">1000</text><text x="607" y="500" class="tk">2000</text><text x="815" y="500" class="tk">3071</text>
</g>

<!-- 3D heart -->
<g transform="translate(1150,240) scale(.33333)">
<g filter="url(#soft)" stroke-linecap="round" fill="none">
<path d="M750,140 L802,147 L788,175 L778,225 L745,235Z" fill="#37b4c4"/>
<path d="M905,172 L942,182 L940,215 L905,215Z" fill="#36b2c2"/>
<path d="M912,234 L940,240" stroke-width="36" stroke="#3cc0cf"/>
<path d="M735,262 L755,262" stroke-width="30" stroke="#3cc0cf"/>
<path d="M940,265 L955,280" stroke-width="24" stroke="#3cc0cf"/>
</g>
<path filter="url(#bump)" fill="#3fc8d6" d="M730,292 C750,275 790,275 810,292 L890,265 C925,258 955,290 950,330 C980,380 1010,430 1028,490 C1018,540 990,570 955,587 C920,570 880,540 850,525 C800,505 745,480 715,450 C692,420 688,385 703,350Z"/>
<g filter="url(#soft)" fill="none" stroke-linecap="round">
<path stroke="#3fc2d2" stroke-width="17" d="M855,118 L792,75"/><path stroke="#55d2de" stroke-width="11" d="M845,106 L802,82"/>
<path stroke="#3fc2d2" stroke-width="17" d="M873,140 L878,102"/>
<path stroke="#3fc2d2" stroke-width="15" d="M905,150 L932,114"/>
<path stroke="#37b4c4" stroke-width="46" d="M772,262 C785,200 825,178 872,155 L925,140"/>
<path stroke="#4fd0dc" stroke-width="28" d="M768,250 C785,195 825,168 872,148 L920,132"/>
<path stroke="#35aebd" stroke-width="68" stroke-linecap="round" d="M862,228 C850,260 850,300 852,345"/>
<path stroke="#4dd2de" stroke-width="46" stroke-linecap="butt" d="M858,215 C843,260 846,300 843,400"/>
</g>
<ellipse cx="840" cy="360" rx="24" ry="42" fill="#6ce2ec" filter="url(#b14)"/>
<ellipse cx="955" cy="530" rx="36" ry="26" fill="#6ce2ec" filter="url(#b14)" opacity=".7"/>
<path d="M958,340 L1000,420 L1020,490" fill="none" stroke="#24919f" stroke-width="7" filter="url(#b3)" opacity=".7"/>
</g>

<rect x="832" y="0" width="4.500" height="507" fill="#000"/>
<rect x="0" y="0" width="1668" height="4" fill="#000"/>
<rect x="0" y="504" width="1668" height="3" fill="#000"/>

<rect x="22" y="24" width="75" height="74" fill="#fff" stroke="#000" stroke-width="1.200"/>
<text x="59.500" y="88" class="big">A</text>
<rect x="852" y="24" width="75" height="74" fill="#fff" stroke="#000" stroke-width="1.200"/>
<text x="890" y="87.500" class="big">B</text>
</svg>
</body></html>
